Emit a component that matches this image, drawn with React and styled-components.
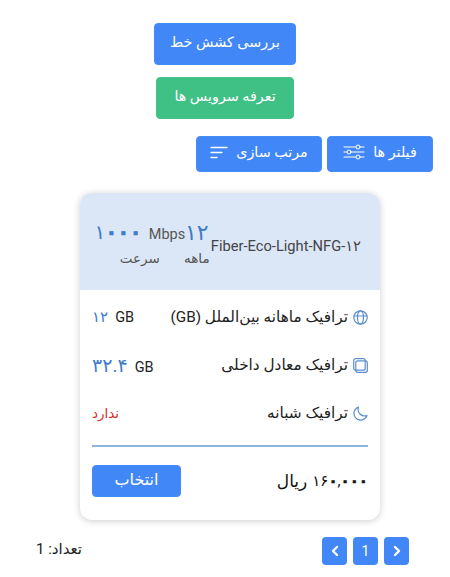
import React from "react";
import styled, { createGlobalStyle } from "styled-components";

const persian = `Roboto, "DejaVu Sans", sans-serif`;

const GlobalStyle = createGlobalStyle`
  html, body {
    margin: 0;
    padding: 0;
    background: #fff;
  }
  * {
    box-sizing: border-box;
  }
`;

const Page = styled.div`
  width: 450px;
  height: 577px;
  overflow: hidden;
  direction: rtl;
  padding-top: 23px;
  font-family: ${persian};
  background: #fff;
`;

const Stack = styled.div`
  display: flex;
  flex-direction: column;
  align-items: center;
  gap: 12px;
`;

const Button = styled.button`
  display: flex;
  align-items: center;
  justify-content: center;
  gap: 8px;
  width: ${(p) => p.$w}px;
  height: ${(p) => p.$h}px;
  padding: 0 0 4px;
  border: 1px solid ${(p) => (p.$green ? "#45c389" : "#478bf7")};
  border-radius: 4px;
  background: ${(p) => (p.$green ? "#3fc185" : "#4187f7")};
  color: #fff;
  font-family: ${persian};
  font-size: ${(p) => p.$fs || 14.3}px;
  font-weight: 400;
`;

const FilterRow = styled.div`
  display: flex;
  gap: 5px;
  margin-top: 17px;
  padding-right: 17px;
`;

const Card = styled.div`
  width: 300px;
  height: 327px;
  margin: 21px 70px 0 0;
  border-radius: 12px;
  overflow: hidden;
  background: #fff;
  box-shadow: 0 1px 7px rgba(0, 0, 0, 0.2);
`;

const CardHead = styled.div`
  height: 97px;
  display: flex;
  align-items: center;
  justify-content: space-between;
  padding: 0 19px 0 17px;
  background: #dbe7f7;
`;

const PlanName = styled.div`
  flex: none;
  direction: ltr;
  margin-top: 9px;
  font-size: 14.7px;
  color: #444;
  white-space: nowrap;
`;

const Specs = styled.div`
  display: flex;
  flex: none;
  margin-top: 2px;
`;

const Spec = styled.div`
  display: flex;
  flex-direction: column;
  align-items: center;
  width: ${(p) => p.$w}px;
`;

const SpecValue = styled.div`
  display: flex;
  align-items: baseline;
  gap: 7px;
  direction: ltr;
  height: 27px;
  color: #3d7cc9;
  font-size: 22px;
  line-height: 27px;
  letter-spacing: -3px;
  white-space: nowrap;
`;

const Speed = styled.span`
  font-size: 20px;
  letter-spacing: -4.5px;
`;

const Zero = styled.span`
  font-weight: 700;
  -webkit-text-stroke: 0.6px currentColor;
`;

const Unit = styled.span`
  font-size: 14.5px;
  letter-spacing: 0;
  color: #555;
`;

const SpecLabel = styled.div`
  margin-top: 4px;
  font-size: 13.5px;
  color: #555;
  white-space: nowrap;
`;

const Rows = styled.div`
  display: flex;
  flex-direction: column;
  gap: 24px;
  padding: 15px 12px 0;
`;

const Row = styled.div`
  display: flex;
  align-items: center;
  justify-content: space-between;
  height: 24px;
`;

const RowTitle = styled.div`
  display: flex;
  align-items: center;
  gap: 5px;
  font-size: 15.3px;
  color: #222;
  white-space: nowrap;
`;

const Quantity = styled.div`
  display: flex;
  align-items: baseline;
  gap: 7px;
  direction: ltr;
  font-size: ${(p) => p.$fs}px;
  color: #3d7cc9;
`;

const GbUnit = styled.span`
  font-size: 14.5px;
  color: #222;
`;

const NoValue = styled.div`
  font-size: 13.5px;
  color: #d5302f;
`;

const Divider = styled.hr`
  height: 2px;
  margin: 20px 12px 0;
  border: 0;
  background: #8fb3dc;
`;

const Footer = styled.div`
  display: flex;
  align-items: center;
  justify-content: space-between;
  padding: 18px 12px 0;
`;

const Price = styled.div`
  display: flex;
  align-items: center;
  gap: 5px;
  font-size: 17px;
  color: #111;
`;

const PriceDigits = styled.span`
  direction: ltr;
  font-size: 15px;
  letter-spacing: -1.5px;
`;

const PagerRow = styled.div`
  display: flex;
  align-items: center;
  justify-content: space-between;
  margin-top: 17px;
  padding: 0 41px 0 36px;
`;

const Pager = styled.div`
  display: flex;
  gap: 6px;
`;

const PageButton = styled.div`
  display: flex;
  align-items: center;
  justify-content: center;
  width: 25px;
  height: 28px;
  border-radius: 4px;
  background: #4187f7;
  color: #fff;
  font-size: 14px;
`;

const Count = styled.div`
  margin-bottom: 4px;
  font-size: 15px;
  color: #222;
`;

const IconSvg = styled.svg`
  flex: none;
  fill: none;
  stroke: ${(p) => p.$color || "currentColor"};
  stroke-width: ${(p) => p.$line || 1};
  stroke-linecap: round;
  stroke-linejoin: round;
`;

const SlidersIcon = () => (
  <IconSvg width="22" height="16" viewBox="0 0 22 16">
    <path d="M1 3h12M17 3h4M1 8h3M8 8h13M1 13h12M17 13h4" />
    <circle cx="15" cy="3" r="2" />
    <circle cx="6" cy="8" r="2" />
    <circle cx="15" cy="13" r="2" />
  </IconSvg>
);

const SortIcon = () => (
  <IconSvg width="18" height="13" viewBox="0 0 18 13" $line={1.3}>
    <path d="M1 1.5h16M1 6.5h11M1 11.5h6" />
  </IconSvg>
);

const GlobeIcon = () => (
  <IconSvg width="15" height="15" viewBox="0 0 15 15" $color="#5b8fd0" $line={1.2}>
    <circle cx="7.5" cy="7.5" r="6.7" />
    <ellipse cx="7.5" cy="7.5" rx="3" ry="6.7" />
    <path d="M1.4 6h12.2" />
  </IconSvg>
);

const CopyIcon = () => (
  <IconSvg width="15" height="15" viewBox="0 0 15 15" $color="#5b8fd0" $line={1.2}>
    <rect x="0.7" y="0.7" width="11.5" height="11.5" rx="2" />
    <rect x="2.8" y="2.8" width="11.5" height="11.5" rx="2" />
  </IconSvg>
);

const MoonIcon = () => (
  <IconSvg width="15" height="15" viewBox="0 0 15 15" $color="#5b8fd0" $line={1.2}>
    <path d="M5.5 1A6.7 6.7 0 1 0 14 9.5 6.6 6.6 0 0 1 5.5 1Z" />
  </IconSvg>
);

const ChevronIcon = ({ right }) => (
  <IconSvg width="8" height="12" viewBox="0 0 8 12" $line={2.4}>
    <path d={right ? "M2 2l4 4-4 4" : "M6 2 2 6l4 4"} />
  </IconSvg>
);

export default function App() {
  return (
    <>
      <GlobalStyle />
      <Page>
        <Stack>
          <Button $w={142} $h={42}>بررسی کشش خط</Button>
          <Button $w={138} $h={42} $green>تعرفه سرویس ها</Button>
        </Stack>

        <FilterRow>
          <Button $w={106} $h={36}>فیلتر ها <SlidersIcon /></Button>
          <Button $w={126} $h={36}>مرتب سازی <SortIcon /></Button>
        </FilterRow>

        <Card>
          <CardHead>
            <PlanName>Fiber-Eco-Light-NFG-۱۲</PlanName>
            <Specs>
              <Spec $w={28}>
                <SpecValue>۱۲</SpecValue>
                <SpecLabel>ماهه</SpecLabel>
              </Spec>
              <Spec $w={86}>
                <SpecValue>
                  <Speed>۱<Zero>۰۰۰</Zero></Speed>
                  <Unit>Mbps</Unit>
                </SpecValue>
                <SpecLabel>سرعت</SpecLabel>
              </Spec>
            </Specs>
          </CardHead>

          <Rows>
            <Row>
              <RowTitle><GlobeIcon /> ترافیک ماهانه بین‌الملل (GB)</RowTitle>
              <Quantity $fs={15}>۱۲ <GbUnit>GB</GbUnit></Quantity>
            </Row>
            <Row>
              <RowTitle><CopyIcon /> ترافیک معادل داخلی</RowTitle>
              <Quantity $fs={19}>۳۲.۴ <GbUnit>GB</GbUnit></Quantity>
            </Row>
            <Row>
              <RowTitle><MoonIcon /> ترافیک شبانه</RowTitle>
              <NoValue>ندارد</NoValue>
            </Row>
          </Rows>

          <Divider />

          <Footer>
            <Price>
              <PriceDigits>۱۶<Zero>۰</Zero>,<Zero>۰۰۰</Zero></PriceDigits>
              ریال
            </Price>
            <Button $w={89} $h={32} $fs={16}>انتخاب</Button>
          </Footer>
        </Card>

        <PagerRow>
          <Pager>
            <PageButton><ChevronIcon right /></PageButton>
            <PageButton>1</PageButton>
            <PageButton><ChevronIcon /></PageButton>
          </Pager>
          <Count>تعداد: 1</Count>
        </PagerRow>
      </Page>
    </>
  );
}
